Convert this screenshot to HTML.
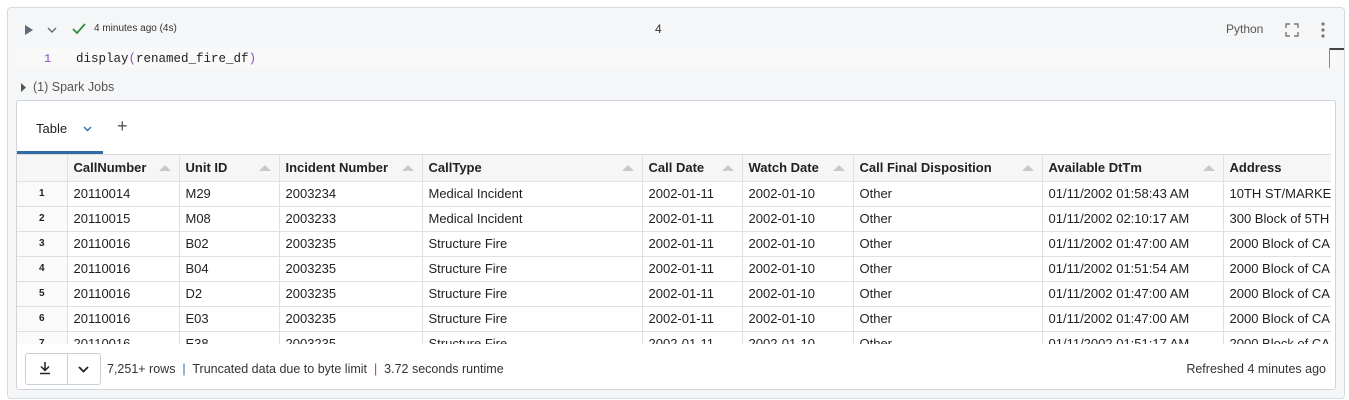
<!DOCTYPE html>
<html><head><style>
*{box-sizing:border-box;margin:0;padding:0}
body{width:1349px;height:400px;background:#fff;font-family:"Liberation Sans",sans-serif;font-size:13px;color:#1f1f1f;position:relative;overflow:hidden}
.cell{position:absolute;left:7px;top:7px;width:1338px;height:392px;background:#f5f6f7;border:1px solid #d7dbe0;border-radius:4px}
.abs{position:absolute}
.code{position:absolute;left:8px;top:40px;width:1320px;height:20px;background:#f9f9fa}
.card{position:absolute;left:8px;top:92px;width:1320px;height:290px;background:#fff;border:1px solid #d0d5db;border-radius:3px;overflow:hidden}
.tbl{position:absolute;left:0;top:53px;width:1314px;height:190px;overflow:hidden;border-top:1px solid #dcdcdc}
table{border-collapse:collapse;table-layout:fixed;width:1360px}
td,th{height:25px;border-right:1px solid #e0e0e0;border-bottom:1px solid #e0e0e0;padding:0 6px;white-space:nowrap;overflow:hidden;text-align:left;font-size:13px}
th{height:26px;background:#f6f6f6;font-weight:bold;color:#222;position:relative}
th .s{position:absolute;right:8px;top:10px;width:0;height:0;border-left:6px solid transparent;border-right:6px solid transparent;border-bottom:6px solid #c8c8c8}
td.n{text-align:center;font-size:10px;font-weight:bold;background:#fafafa}
th.n{background:#f6f6f6}
</style></head><body>
<div class="cell">
 <svg class="abs" style="left:16px;top:17px" width="10" height="10"><path d="M1 0L9 5L1 10Z" fill="#5f6b77"/></svg>
 <svg class="abs" style="left:39px;top:19px" width="10" height="7"><path d="M1 1L5 5L9 1" stroke="#5f6b77" stroke-width="1.4" fill="none"/></svg>
 <svg class="abs" style="left:64px;top:15px" width="14" height="12"><path d="M1 6L5 10L13 1" stroke="#2a8a3e" stroke-width="1.7" fill="none"/></svg>
 <div class="abs" style="left:86px;top:15px;font-size:10px;color:#333">4 minutes ago (4s)</div>
 <div class="abs" style="left:647px;top:14px;font-size:12px;color:#333">4</div>
 <div class="abs" style="left:1218px;top:14px;font-size:12px;color:#555">Python</div>
 <svg class="abs" style="left:1277px;top:15px" width="14" height="14"><path d="M1 5V1H5M9 1H13V5M13 9V13H9M5 13H1V9" stroke="#777" stroke-width="1.4" fill="none"/></svg>
 <svg class="abs" style="left:1313px;top:14px" width="4" height="16"><circle cx="2" cy="2" r="1.6" fill="#777"/><circle cx="2" cy="8" r="1.6" fill="#777"/><circle cx="2" cy="14" r="1.6" fill="#777"/></svg>
 <div class="code"></div>
 <div class="abs" style="left:1321px;top:40px;width:15px;height:2px;background:#444"></div>
 <div class="abs" style="left:1321px;top:40px;width:1px;height:20px;background:#888"></div>
 <div class="abs" style="left:36px;top:44px;font-family:'Liberation Mono',monospace;font-size:12px;color:#8a4fc8">1</div>
 <div class="abs" style="left:68px;top:44px;font-family:'Liberation Mono',monospace;font-size:12.5px;color:#222">display<span style="color:#8a4fc8">(</span>renamed_fire_df<span style="color:#8a4fc8">)</span></div>
 <svg class="abs" style="left:13px;top:75px" width="6" height="9"><path d="M0 0L5 4.5L0 9Z" fill="#555"/></svg>
 <div class="abs" style="left:25px;top:72px;font-size:12.5px;color:#555">(1) Spark Jobs</div>
 <div class="card">
  <div class="abs" style="left:19px;top:20px;font-size:13px;color:#222">Table</div>
  <svg class="abs" style="left:66px;top:25px" width="9" height="6"><path d="M1 1L4.5 4.5L8 1" stroke="#2e6fb0" stroke-width="1.4" fill="none"/></svg>
  <div class="abs" style="left:100px;top:15px;font-size:18px;color:#555;font-weight:300">+</div>
  <div class="abs" style="left:0;top:50px;width:86px;height:3px;background:#2e6ca7"></div>
  <div class="tbl"><table>
   <colgroup><col style="width:50px"><col style="width:112px"><col style="width:100px"><col style="width:143px"><col style="width:220px"><col style="width:100px"><col style="width:111px"><col style="width:189px"><col style="width:181px"><col style="width:154px"></colgroup>
   <tr><th class="n"></th><th>CallNumber<span class="s"></span></th><th>Unit ID<span class="s"></span></th><th>Incident Number<span class="s"></span></th><th>CallType<span class="s"></span></th><th>Call Date<span class="s"></span></th><th>Watch Date<span class="s"></span></th><th>Call Final Disposition<span class="s"></span></th><th>Available DtTm<span class="s"></span></th><th>Address</th></tr>
   <tr><td class="n">1</td><td>20110014</td><td>M29</td><td>2003234</td><td>Medical Incident</td><td>2002-01-11</td><td>2002-01-10</td><td>Other</td><td>01/11/2002 01:58:43 AM</td><td>10TH ST/MARKET ST</td></tr>
   <tr><td class="n">2</td><td>20110015</td><td>M08</td><td>2003233</td><td>Medical Incident</td><td>2002-01-11</td><td>2002-01-10</td><td>Other</td><td>01/11/2002 02:10:17 AM</td><td>300 Block of 5TH ST</td></tr>
   <tr><td class="n">3</td><td>20110016</td><td>B02</td><td>2003235</td><td>Structure Fire</td><td>2002-01-11</td><td>2002-01-10</td><td>Other</td><td>01/11/2002 01:47:00 AM</td><td>2000 Block of CALIF</td></tr>
   <tr><td class="n">4</td><td>20110016</td><td>B04</td><td>2003235</td><td>Structure Fire</td><td>2002-01-11</td><td>2002-01-10</td><td>Other</td><td>01/11/2002 01:51:54 AM</td><td>2000 Block of CALIF</td></tr>
   <tr><td class="n">5</td><td>20110016</td><td>D2</td><td>2003235</td><td>Structure Fire</td><td>2002-01-11</td><td>2002-01-10</td><td>Other</td><td>01/11/2002 01:47:00 AM</td><td>2000 Block of CALIF</td></tr>
   <tr><td class="n">6</td><td>20110016</td><td>E03</td><td>2003235</td><td>Structure Fire</td><td>2002-01-11</td><td>2002-01-10</td><td>Other</td><td>01/11/2002 01:47:00 AM</td><td>2000 Block of CALIF</td></tr>
   <tr><td class="n">7</td><td>20110016</td><td>E38</td><td>2003235</td><td>Structure Fire</td><td>2002-01-11</td><td>2002-01-10</td><td>Other</td><td>01/11/2002 01:51:17 AM</td><td>2000 Block of CALIF</td></tr>
  </table></div>
  <div class="abs" style="left:8px;top:252px;width:76px;height:32px;border:1px solid #c9ced4;border-radius:3px;background:#fff"></div>
  <div class="abs" style="left:50px;top:252px;width:1px;height:32px;background:#c9ced4"></div>
  <svg class="abs" style="left:21px;top:260px" width="14" height="14"><path d="M7 1V9M3 5.5L7 9.5L11 5.5M2 12.5H12" stroke="#222" stroke-width="1.5" fill="none"/></svg>
  <svg class="abs" style="left:61px;top:265px" width="11" height="7"><path d="M1 1L5.5 5.5L10 1" stroke="#222" stroke-width="1.8" fill="none"/></svg>
  <div class="abs" style="left:90px;top:261px;font-size:12.5px;color:#333">7,251+ rows <span style="color:#2e6ca7">&nbsp;|&nbsp;</span> Truncated data due to byte limit <span style="color:#b04040">&nbsp;|&nbsp;</span> 3.72 seconds runtime</div>
  <div class="abs" style="right:9px;top:261px;font-size:12.5px;color:#333">Refreshed 4 minutes ago</div>
 </div>
</div>
</body></html>
